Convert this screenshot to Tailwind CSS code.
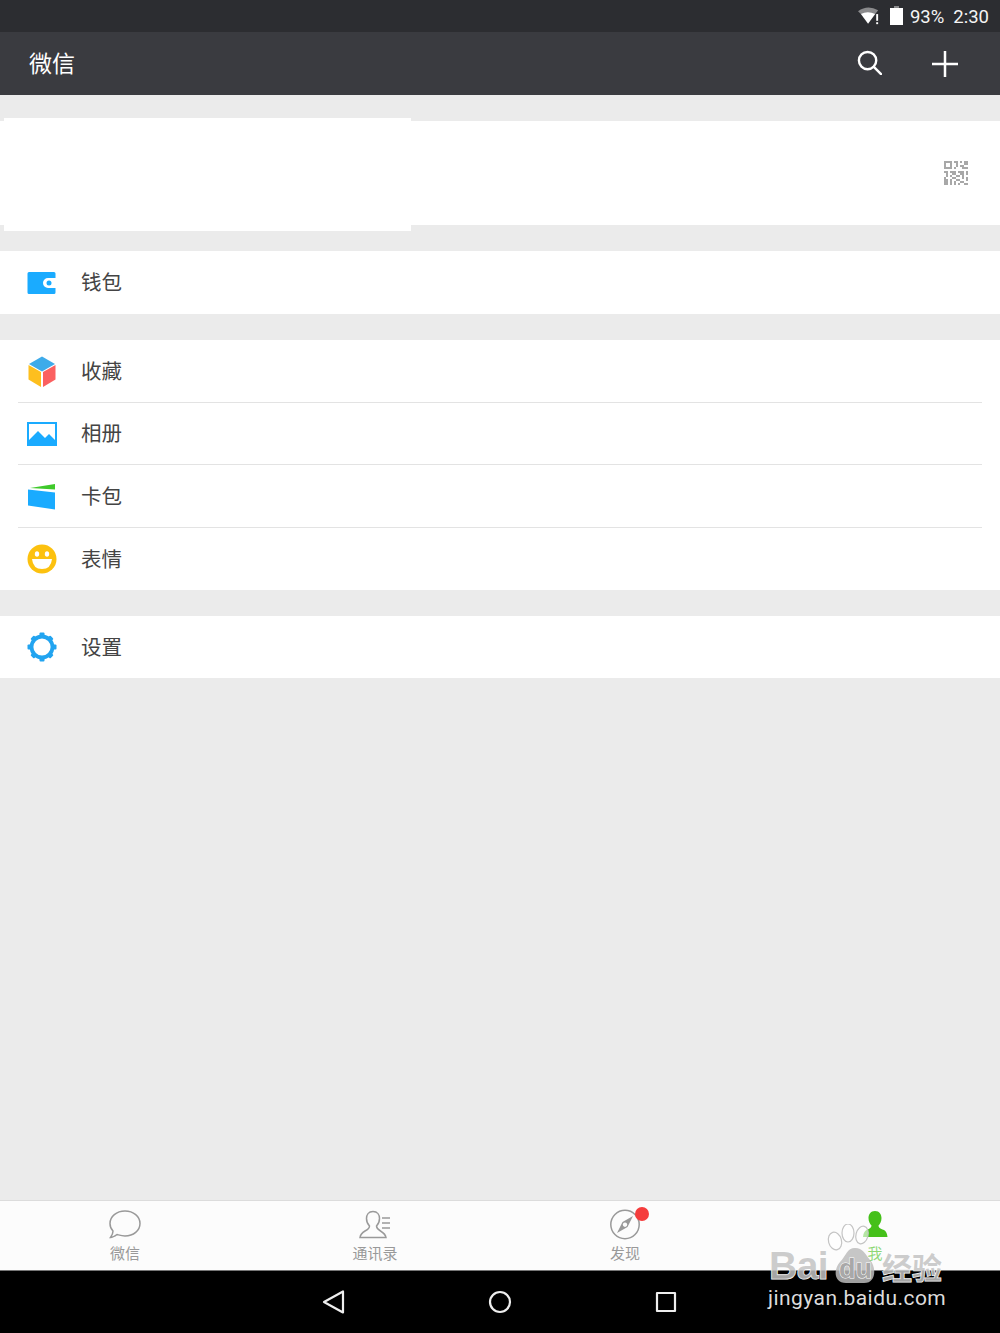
<!DOCTYPE html>
<html lang="zh-CN">
<head>
    <meta charset="UTF-8">
    <meta name="viewport" content="width=device-width, initial-scale=1.0">
    <title>微信</title>
    <script src="https://cdn.jsdelivr.net/npm/@tailwindcss/browser@4"></script>
</head>
<body class="bg-[#ebebeb] font-['Roboto','Noto_Sans_CJK_SC',sans-serif]">
<div class="relative w-[1000px] h-[1333px] flex flex-col overflow-hidden">

    <!-- Status bar -->
    <div class="h-8 bg-[#2c2d31] flex items-center justify-end pr-[11px] text-[#f4f4f4] text-[18.500px] shrink-0">
        <svg class="w-[23px] h-[20px] mr-[9px]" viewBox="0 0 24 20">
            <path d="M0 5 Q10 -2 21 4 L18 8 L3 8 Z" fill="#8a8a8c"/>
            <path d="M3 8 Q10 4 18 8 L10.500 18 Z" fill="#fff"/>
            <rect x="19" y="8" width="2" height="7" fill="#fff"/>
            <rect x="19" y="16.500" width="2" height="2" fill="#fff"/>
        </svg>
        <svg class="w-[13px] h-[20px] mr-[7px]" viewBox="0 0 13 20">
            <rect x="4" y="0" width="5" height="3" fill="#8a8a8c"/>
            <rect x="0" y="2" width="13" height="17" fill="#fff"/>
        </svg>
        <span class="mr-[9px] pt-[3px]">93%</span>
        <span class="pt-[3px]">2:30</span>
    </div>

    <!-- Header -->
    <div class="h-[63px] bg-[#3a3b40] flex items-center pl-[29px] shrink-0">
        <span class="text-white text-[23px] flex-1 pt-[3px]">微信</span>
        <svg class="w-[25px] h-[25px] mr-[50px] relative top-[-1px]" viewBox="0 0 26 26" fill="none" stroke="#fff" stroke-width="2.500">
            <circle cx="11" cy="11" r="9"/>
            <path d="M17.500 17.500 L25 25" stroke-linecap="round"/>
        </svg>
        <svg class="w-[26px] h-[26px] mr-[42px]" viewBox="0 0 26 26" stroke="#fff" stroke-width="2.500">
            <path d="M0 13 H26 M13 0 V26"/>
        </svg>
    </div>

    <!-- Profile -->
    <div class="relative mt-[26px] h-[104px] bg-white flex items-center justify-end pr-[32px] shrink-0">
        <div class="absolute left-[4px] top-[-3px] w-[407px] h-[113px] bg-white"></div>
        <svg class="w-6 h-6 relative" viewBox="0 0 12 12" fill="#a8a8a8">
            <path d="M0 0h4v4H0z M1 1v2h2V1z" fill-rule="evenodd"/>
            <path d="M5 0h2v1H5z M8 0h1v1H8z M10 0h2v2h-2z M6 1h1v2H6z M8 2h2v1H8z M5 3h1v1H5z M9 3h3v1H9z"/>
            <path d="M0 5h2v1H0z M3 5h3v1H3z M7 5h3v1H7z M11 5h1v2h-1z M1 6h1v2H1z M4 6h2v1H4z M8 6h2v1H8z"/>
            <path d="M3 7h1v1H3z M6 7h2v1H6z M9 7h1v2H9z M0 8h1v1H0z M4 8h2v1H4z M11 8h1v2h-1z"/>
            <path d="M0 9h2v3H0z M3 9h1v2H3z M6 9h2v1H6z M5 10h1v2H5z M8 10h2v1H8z M3 11h1v1H3z M7 11h1v1H7z M10 11h2v1h-2z"/>
        </svg>
    </div>

    <!-- Wallet -->
    <div class="mt-[26px] h-[63px] bg-white flex items-center pl-[27px] text-[20.500px] text-[#444] shrink-0">
        <svg class="w-[30px] h-[24px] mr-[24px]" viewBox="0 0 30 24">
            <path fill-rule="evenodd" fill="#1aabff" d="M2 1 H27 Q28.500 1 28.500 2.500 V7 H21 A5 5 0 0 0 21 17 H28.500 V21.500 Q28.500 23 27 23 H2 Q0.500 23 0.500 21.500 V2.500 Q0.500 1 2 1 Z"/>
            <circle cx="22" cy="12" r="2.500" fill="#1aabff"/>
        </svg>
        <span class="pt-[2px]">钱包</span>
    </div>

    <!-- Group -->
    <div class="mt-[26px] bg-white text-[20.500px] text-[#444] shrink-0">
        <div class="h-[62px] flex items-center pl-[27px]">
            <svg class="w-[30px] h-[31px] mr-[24px]" viewBox="0 0 30 31">
                <path d="M15 0.500 L28 8 L15 15.500 L2 8 Z" fill="#3eabea"/>
                <path d="M1.500 9 L14 16 V31 L1.500 23.500 Z" fill="#fdbf1f"/>
                <path d="M28.500 9 L16 16 V31 L28.500 23.500 Z" fill="#fb6060"/>
            </svg>
            <span class="pt-[2px]">收藏</span>
        </div>
        <div class="ml-[18px] mr-[18px] h-[1px] bg-[#e3e3e3]"></div>
        <div class="h-[61px] flex items-center pl-[27px]">
            <svg class="w-[30px] h-[24px] mr-[24px]" viewBox="0 0 30 24">
                <rect x="1" y="1" width="28" height="22" fill="none" stroke="#1aabff" stroke-width="2"/>
                <path d="M1 19 L11 9 L18 16 L22 12 L29 19 V23 H1 Z" fill="#1aabff"/>
            </svg>
            <span class="pt-[2px]">相册</span>
        </div>
        <div class="ml-[18px] mr-[18px] h-[1px] bg-[#e3e3e3]"></div>
        <div class="h-[62px] flex items-center pl-[27px]">
            <svg class="w-[30px] h-[27px] mr-[24px]" viewBox="0 0 30 27">
                <path d="M3 5 L28 1 V6.500 Z" fill="#3fc92b"/>
                <path d="M1 6.500 L28 9.500 V26.500 L1 22.500 Z" fill="#1aabff"/>
            </svg>
            <span class="pt-[2px]">卡包</span>
        </div>
        <div class="ml-[18px] mr-[18px] h-[1px] bg-[#e3e3e3]"></div>
        <div class="h-[62px] flex items-center pl-[27px]">
            <svg class="w-[30px] h-[30px] mr-[24px]" viewBox="0 0 30 30">
                <circle cx="15" cy="15" r="14.500" fill="#fcc10f"/>
                <ellipse cx="10" cy="10" rx="2.200" ry="2.800" fill="#fff"/>
                <ellipse cx="20" cy="10" rx="2.200" ry="2.800" fill="#fff"/>
                <path d="M5 15 H25 Q24 25 15 25 Q6 25 5 15 Z" fill="#fff"/>
            </svg>
            <span class="pt-[2px]">表情</span>
        </div>
    </div>

    <!-- Settings -->
    <div class="mt-[26px] h-[62px] bg-white flex items-center pl-[27px] text-[20.500px] text-[#444] shrink-0">
        <svg class="w-[30px] h-[30px] mr-[24px]" viewBox="0 0 30 30">
            <circle cx="15" cy="15" r="10.500" fill="none" stroke="#22a4f0" stroke-width="3.800"/>
            <g fill="#22a4f0">
                <rect x="12.500" y="0.500" width="5" height="4" rx="1"/>
                <rect x="12.500" y="25.500" width="5" height="4" rx="1"/>
                <rect x="0.500" y="12.500" width="4" height="5" rx="1"/>
                <rect x="25.500" y="12.500" width="4" height="5" rx="1"/>
                <rect x="12.500" y="1" width="5" height="4" rx="1" transform="rotate(45 15 15)"/>
                <rect x="12.500" y="1" width="5" height="4" rx="1" transform="rotate(135 15 15)"/>
                <rect x="12.500" y="1" width="5" height="4" rx="1" transform="rotate(225 15 15)"/>
                <rect x="12.500" y="1" width="5" height="4" rx="1" transform="rotate(315 15 15)"/>
            </g>
        </svg>
        <span class="pt-[2px]">设置</span>
    </div>

    <div class="flex-1"></div>

    <!-- Tab bar -->
    <div class="h-[70px] bg-[#fcfcfc] border-t border-[#dcdcdc] grid grid-cols-4 text-[15px] leading-[16px] text-[#999] shrink-0">
        <div class="flex flex-col items-center pt-[9px]">
            <svg class="w-8 h-[29px]" viewBox="0 0 32 29" fill="none" stroke="#999" stroke-width="1.500">
                <path d="M16 1 C24.500 1 31 6.500 31 13.500 C31 20.500 24.500 26 16 26 C12.500 26 10 25 8 24.500 C6 26 3.500 27.500 1.500 27.500 C3 25.500 4 23.500 4 21 C2 19 1 16.500 1 13.500 C1 6.500 7.500 1 16 1 Z"/>
            </svg>
            <span class="mt-[7px]">微信</span>
        </div>
        <div class="flex flex-col items-center pt-[9px]">
            <svg class="w-8 h-[29px]" viewBox="0 0 32 29" fill="none" stroke="#999" stroke-width="1.500">
                <path d="M14 1.500 C9.500 1.500 7.500 5 7.500 8.500 C7.500 12 9 14.500 10.500 16 C10.500 18.500 9 19.500 6 21 C3.500 22.500 1.500 24 1 27.500 H27 C26.500 24 24 22.500 21.500 21 C19 19.500 17.500 18.500 17.500 16 C19 14.500 20.500 12 20.500 8.500 C20.500 5 18.500 1.500 14 1.500 Z"/>
                <path d="M23 8 H31 M23 13 H31 M23 18 H31"/>
            </svg>
            <span class="mt-[7px]">通讯录</span>
        </div>
        <div class="relative flex flex-col items-center pt-[8px]">
            <svg class="w-8 h-[31px] mb-[-1px]" viewBox="0 0 32 31">
                <circle cx="16" cy="15.500" r="14.200" fill="none" stroke="#999" stroke-width="1.500"/>
                <path d="M24 7 L18.500 18 L8 24 L13.500 13 Z M16 13.500 A2.200 2.200 0 1 0 16.010 13.500 Z" fill="#999" fill-rule="evenodd"/>
            </svg>
            <span class="mt-[7px]">发现</span>
            <div class="absolute left-[135px] top-[6px] w-[14px] h-[14px] rounded-full bg-[#f53c3c]"></div>
        </div>
        <div class="flex flex-col items-center pt-[9px] text-[#45c01a]/60">
            <svg class="w-8 h-[29px]" viewBox="0 0 32 29" fill="#45c01a">
                <path d="M16 1 C20.500 1 22.500 4.500 22.500 8 C22.500 11.500 21 14 19.500 15.500 C19.500 17.500 21 18.500 25 20 C27 21 28 23 28.500 27 H4 C4.500 23 5.500 21 7.500 20 C11 18.500 12.500 17.500 12.500 15.500 C11 14 9.500 11.500 9.500 8 C9.500 4.500 11.500 1 16 1 Z"/>
            </svg>
            <span class="mt-[7px]">我</span>
        </div>
    </div>

    <!-- Android nav bar -->
    <div class="h-[63px] bg-black border-t border-[#777] flex items-center justify-center gap-[141px] pr-[2px] shrink-0">
        <svg class="w-[24px] h-[24px]" viewBox="0 0 24 24" fill="none" stroke="#eee" stroke-width="2.200" stroke-linejoin="round">
            <path d="M22 1.500 V22.500 L3 12 Z"/>
        </svg>
        <svg class="w-[24px] h-[24px] mx-[2px]" viewBox="0 0 24 24" fill="none" stroke="#eee" stroke-width="2.200">
            <circle cx="12" cy="12" r="10"/>
        </svg>
        <svg class="w-[22px] h-[22px]" viewBox="0 0 22 22" fill="none" stroke="#eee" stroke-width="2.200" stroke-linejoin="round">
            <rect x="2" y="2" width="18" height="18"/>
        </svg>
    </div>

    <!-- Baidu watermark -->
    <div class="absolute left-[767px] top-[1224px] w-[180px] h-[100px]">
        <svg class="absolute left-[60px] top-0 w-[62px] h-[60px]" viewBox="0 0 62 60">
            <g fill="#fff" fill-opacity="0.6" stroke="#c4c4c4" stroke-width="1.200">
                <ellipse cx="8" cy="17" rx="6.500" ry="9" transform="rotate(-15 8 17)"/>
                <ellipse cx="21" cy="9" rx="6" ry="9"/>
                <ellipse cx="35" cy="11" rx="6" ry="9" transform="rotate(15 35 11)"/>
            </g>
            <path d="M28 24 C36 24 38 30 43 36 C49 42 50 59 37 59 H19 C7 59 6 46 13 38 C19 32 20 24 28 24 Z" fill="#bcbcbc" fill-opacity="0.85"/>
        </svg>
        <div class="absolute left-[2px] top-[20px] font-['Liberation_Sans',sans-serif] font-bold text-[39px] leading-[44px] tracking-[-0.5px] text-[#c4c4c4]/85 [-webkit-text-stroke:1px_#fff] [paint-order:stroke_fill]">Bai</div>
        <div class="absolute left-[72px] top-[30px] font-['Liberation_Sans',sans-serif] font-bold text-[27px] leading-[30px] text-[#a8a8a8] [-webkit-text-stroke:1px_#fff] [paint-order:stroke_fill]">du</div>
        <div class="absolute left-[115px] top-[24px] font-['Noto_Sans_CJK_SC',sans-serif] font-bold text-[30px] leading-[36px] text-[#c4c4c4]/85 [-webkit-text-stroke:1px_#fff] [paint-order:stroke_fill]">经验</div>
        <div class="absolute left-[1px] top-[61px] text-[21px] leading-[26px] tracking-[0.45px] text-[#dcdcdc] font-['Roboto',sans-serif]">jingyan.baidu.com</div>
    </div>
</div>
</body>
</html>
